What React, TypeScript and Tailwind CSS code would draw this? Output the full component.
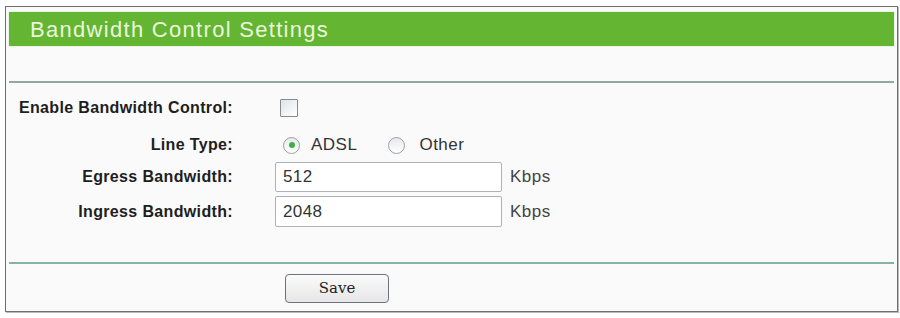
import React from "react";

const Radio = ({ checked }: { checked?: boolean }) => (
  <span className="flex h-[17px] w-[17px] items-center justify-center rounded-full border border-[#9aa0a6] bg-gradient-to-b from-[#e6e9ec] to-[#ffffff]">
    {checked && <span className="h-[6px] w-[6px] rounded-full bg-[#3fae4a]" />}
  </span>
);

const Row = ({ label, className, children }: any) => (
  <div className={`flex items-center ${className}`}>
    <div className="w-[224px] text-right text-[16px] font-bold tracking-[0.35px] text-[#1e1e1e]">
      {label}
    </div>
    <div className="ml-[42px] flex h-full items-center">{children}</div>
  </div>
);

const BandwidthInput = ({ value }: { value: string }) => (
  <>
    <input
      readOnly
      value={value}
      className="h-full w-[227px] rounded-[2px] border border-[#aab2bb] bg-white px-[7px] text-[17px] tracking-[0.4px] text-[#333] outline-none"
    />
    <span className="ml-[8px] text-[17px] tracking-[0.5px] text-[#444]">Kbps</span>
  </>
);

export default function App() {
  return (
    <div className="min-h-[318px] bg-white pl-[5px] pt-[6px] font-['Liberation_Sans',Arial,sans-serif]">
      <div className="flex h-[306px] w-[893px] flex-col border border-[#6f6f6f] bg-[#fafafa] px-[3px] pt-[5px] shadow-[1px_1px_0_#bbb]">
        <div className="flex h-[34px] items-center bg-[#64b532] pl-[21px] shadow-[0_0_1px_#9ad27a]">
          <h1 className="text-[22px] tracking-[1.3px] text-[#eaf7dd]">Bandwidth Control Settings</h1>
        </div>
        <div className="mt-[35px] h-[2px] bg-[#93a8a0]" />

        <div className="mt-[9px] flex flex-col">
          <Row label="Enable Bandwidth Control:" className="h-[32px]">
            <span className="ml-[5px] h-[18px] w-[18px] rounded-[1px] border border-[#858b92] bg-gradient-to-br from-[#e0e3e6] to-[#ffffff]" />
          </Row>
          <Row label="Line Type:" className="h-[38px] pt-[4px]">
            <span className="ml-[8px] flex items-center gap-[11px]">
              <Radio checked />
              <span className="text-[17px] tracking-[0.5px] text-[#333]">ADSL</span>
            </span>
            <span className="ml-[31px] flex items-center gap-[14px]">
              <Radio />
              <span className="text-[17px] tracking-[0.5px] text-[#333]">Other</span>
            </span>
          </Row>
          <Row label="Egress Bandwidth:" className="h-[30px]">
            <BandwidthInput value="512" />
          </Row>
          <Row label="Ingress Bandwidth:" className="mt-[4px] h-[31px]">
            <BandwidthInput value="2048" />
          </Row>
        </div>

        <div className="mt-[35px] h-[2px] bg-[#86b4a2]" />
        <div className="mt-[10px] pl-[276px]">
          <button className="h-[29px] w-[104px] rounded-[4px] border border-[#6e7379] bg-gradient-to-b from-[#fbfbfb] to-[#e6e6e6] font-['DejaVu_Serif',serif] text-[15px] text-[#222]">
            Save
          </button>
        </div>
      </div>
    </div>
  );
}
